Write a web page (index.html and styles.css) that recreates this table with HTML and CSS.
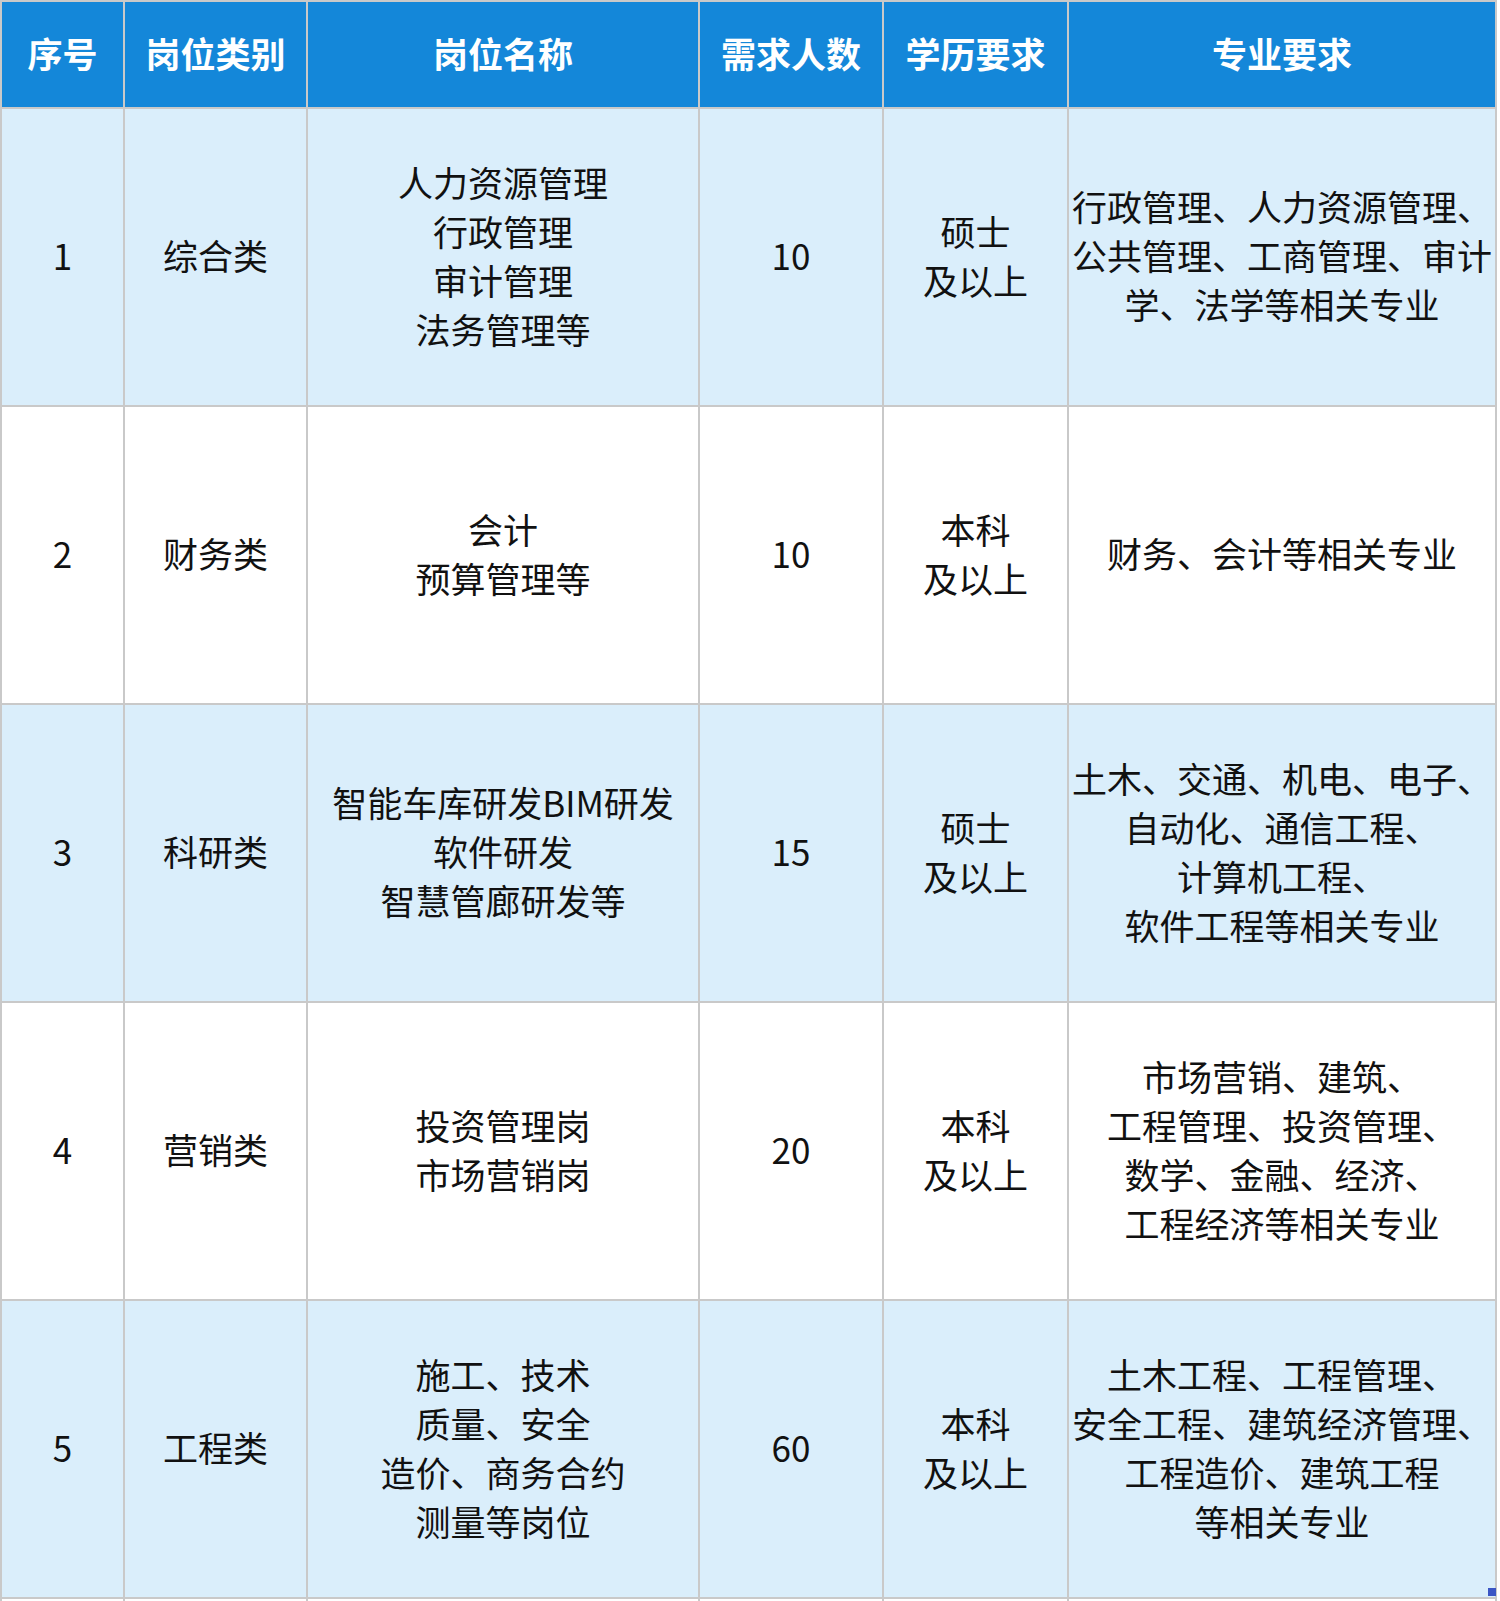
FILE: index.html
```html
<!DOCTYPE html>
<html lang="zh-CN">
<head>
<meta charset="utf-8">
<title>招聘岗位</title>
<link rel="stylesheet" href="styles.css">
</head>
<body>
<div class="wrap">
<table class="jobs">
  <colgroup>
    <col class="c-no">
    <col class="c-cat">
    <col class="c-name">
    <col class="c-num">
    <col class="c-edu">
    <col class="c-major">
  </colgroup>
  <thead>
    <tr class="head">
      <th>序号</th>
      <th>岗位类别</th>
      <th>岗位名称</th>
      <th>需求人数</th>
      <th>学历要求</th>
      <th>专业要求</th>
    </tr>
  </thead>
  <tbody>
    <tr class="odd">
      <td>1</td>
      <td>综合类</td>
      <td>人力资源管理<br>行政管理<br>审计管理<br>法务管理等</td>
      <td>10</td>
      <td>硕士<br>及以上</td>
      <td>行政管理、人力资源管理、<br>公共管理、工商管理、审计<br>学、法学等相关专业</td>
    </tr>
    <tr class="even">
      <td>2</td>
      <td>财务类</td>
      <td>会计<br>预算管理等</td>
      <td>10</td>
      <td>本科<br>及以上</td>
      <td>财务、会计等相关专业</td>
    </tr>
    <tr class="odd">
      <td>3</td>
      <td>科研类</td>
      <td>智能车库研发BIM研发<br>软件研发<br>智慧管廊研发等</td>
      <td>15</td>
      <td>硕士<br>及以上</td>
      <td>土木、交通、机电、电子、<br>自动化、通信工程、<br>计算机工程、<br>软件工程等相关专业</td>
    </tr>
    <tr class="even">
      <td>4</td>
      <td>营销类</td>
      <td>投资管理岗<br>市场营销岗</td>
      <td>20</td>
      <td>本科<br>及以上</td>
      <td>市场营销、建筑、<br>工程管理、投资管理、<br>数学、金融、经济、<br>工程经济等相关专业</td>
    </tr>
    <tr class="odd">
      <td>5</td>
      <td>工程类</td>
      <td>施工、技术<br>质量、安全<br>造价、商务合约<br>测量等岗位</td>
      <td>60</td>
      <td>本科<br>及以上</td>
      <td>土木工程、工程管理、<br>安全工程、建筑经济管理、<br>工程造价、建筑工程<br>等相关专业</td>
    </tr>
    <tr class="even">
      <td></td>
      <td></td>
      <td></td>
      <td></td>
      <td></td>
      <td></td>
    </tr>
  </tbody>
</table>
<span class="handle"></span>
</div>
</body>
</html>
```

FILE: styles.css
```css
html, body {
  margin: 0;
  padding: 0;
  background: #ffffff;
}

.wrap {
  position: relative;
  width: 1497px;
}

.jobs {
  width: 1497px;
  table-layout: fixed;
  border-collapse: collapse;
  font-family: "Noto Sans CJK SC", "Noto Sans", sans-serif;
  font-size: 35px;
  line-height: 49px;
  color: #111111;
}

.c-no { width: 123px; }
.c-cat { width: 183px; }
.c-name { width: 392px; }
.c-num { width: 184px; }
.c-edu { width: 185px; }
.c-major { width: 428px; }

.jobs th,
.jobs td {
  border: 2px solid #c9c9c9;
  padding: 0 2px 5px;
  text-align: center;
  vertical-align: middle;
  white-space: nowrap;
  overflow: hidden;
}

.head {
  height: 107px;
  background: #1487d9;
}

.head th {
  color: #ffffff;
  font-weight: 700;
  font-size: 35px;
}

.jobs tbody tr {
  height: 298px;
}

.odd {
  background: #daeefb;
}

.even {
  background: #ffffff;
}

.handle {
  position: absolute;
  left: 1488px;
  top: 1588px;
  width: 8px;
  height: 8px;
  background: #3b55c4;
}
```
